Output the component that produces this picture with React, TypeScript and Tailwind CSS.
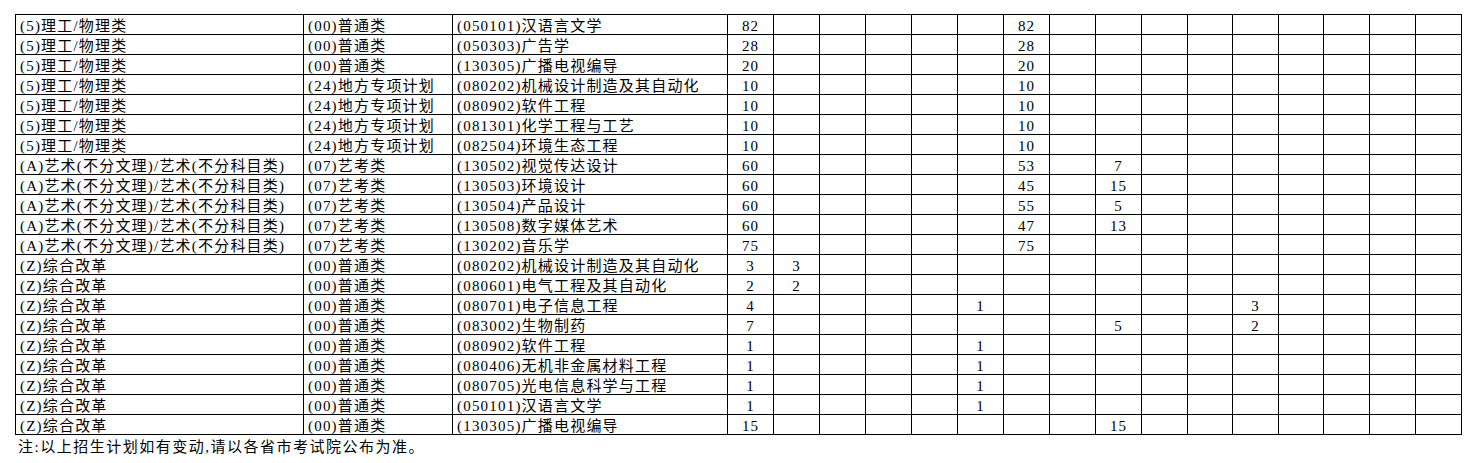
interface PlanRow {
    kelei: string;
    pici: string;
    zhuanye: string;
    total: number;
    // numeric columns 2..16, keyed by column index
    cells: Record<number, number>;
}

const LI = "(5)理工/物理类";
const YI = "(A)艺术(不分文理)/艺术(不分科目类)";
const ZH = "(Z)综合改革";
const PT = "(00)普通类";
const DF = "(24)地方专项计划";
const YK = "(07)艺考类";

const rows: PlanRow[] = [
    { kelei: LI, pici: PT, zhuanye: "(050101)汉语言文学", total: 82, cells: { 7: 82 } },
    { kelei: LI, pici: PT, zhuanye: "(050303)广告学", total: 28, cells: { 7: 28 } },
    { kelei: LI, pici: PT, zhuanye: "(130305)广播电视编导", total: 20, cells: { 7: 20 } },
    { kelei: LI, pici: DF, zhuanye: "(080202)机械设计制造及其自动化", total: 10, cells: { 7: 10 } },
    { kelei: LI, pici: DF, zhuanye: "(080902)软件工程", total: 10, cells: { 7: 10 } },
    { kelei: LI, pici: DF, zhuanye: "(081301)化学工程与工艺", total: 10, cells: { 7: 10 } },
    { kelei: LI, pici: DF, zhuanye: "(082504)环境生态工程", total: 10, cells: { 7: 10 } },
    { kelei: YI, pici: YK, zhuanye: "(130502)视觉传达设计", total: 60, cells: { 7: 53, 9: 7 } },
    { kelei: YI, pici: YK, zhuanye: "(130503)环境设计", total: 60, cells: { 7: 45, 9: 15 } },
    { kelei: YI, pici: YK, zhuanye: "(130504)产品设计", total: 60, cells: { 7: 55, 9: 5 } },
    { kelei: YI, pici: YK, zhuanye: "(130508)数字媒体艺术", total: 60, cells: { 7: 47, 9: 13 } },
    { kelei: YI, pici: YK, zhuanye: "(130202)音乐学", total: 75, cells: { 7: 75 } },
    { kelei: ZH, pici: PT, zhuanye: "(080202)机械设计制造及其自动化", total: 3, cells: { 2: 3 } },
    { kelei: ZH, pici: PT, zhuanye: "(080601)电气工程及其自动化", total: 2, cells: { 2: 2 } },
    { kelei: ZH, pici: PT, zhuanye: "(080701)电子信息工程", total: 4, cells: { 6: 1, 12: 3 } },
    { kelei: ZH, pici: PT, zhuanye: "(083002)生物制药", total: 7, cells: { 9: 5, 12: 2 } },
    { kelei: ZH, pici: PT, zhuanye: "(080902)软件工程", total: 1, cells: { 6: 1 } },
    { kelei: ZH, pici: PT, zhuanye: "(080406)无机非金属材料工程", total: 1, cells: { 6: 1 } },
    { kelei: ZH, pici: PT, zhuanye: "(080705)光电信息科学与工程", total: 1, cells: { 6: 1 } },
    { kelei: ZH, pici: PT, zhuanye: "(050101)汉语言文学", total: 1, cells: { 6: 1 } },
    { kelei: ZH, pici: PT, zhuanye: "(130305)广播电视编导", total: 15, cells: { 9: 15 } },
];

const numCols = Array.from({ length: 15 }, (_, i) => i + 2);

const textCell = "h-[20px] border-r border-b border-black pl-1 pt-[2px] leading-[18px] tracking-[1.2px] whitespace-nowrap overflow-hidden";
const numCell = "h-[20px] border-r border-b border-black pt-[2px] leading-[18px] text-center";

export default function App() {
    return (
        <div className="min-h-[463px] bg-white pl-[15px] pt-[14px] text-black text-[15px] tracking-[1px] font-['Liberation_Serif','Noto_Sans_CJK_SC',serif]">
            <div className="grid w-[1447px] grid-cols-[288px_149px_275px_46px_46px_46px_46px_46px_46px_46px_46px_46px_46px_45px_46px_45px_46px_46px_46px] border-l border-t border-black">
                {rows.map((row, index) => (
                    <div key={index} className="contents">
                        <div className={textCell}>{row.kelei}</div>
                        <div className={textCell}>{row.pici}</div>
                        <div className={textCell}>{row.zhuanye}</div>
                        <div className={numCell}>{row.total}</div>
                        {numCols.map((c) => (
                            <div key={c} className={numCell}>{row.cells[c] ?? ""}</div>
                        ))}
                    </div>
                ))}
            </div>
            <p className="pl-[3px] pt-[3px] leading-[18px] tracking-[1.5px]">注:以上招生计划如有变动,请以各省市考试院公布为准。</p>
        </div>
    );
}
